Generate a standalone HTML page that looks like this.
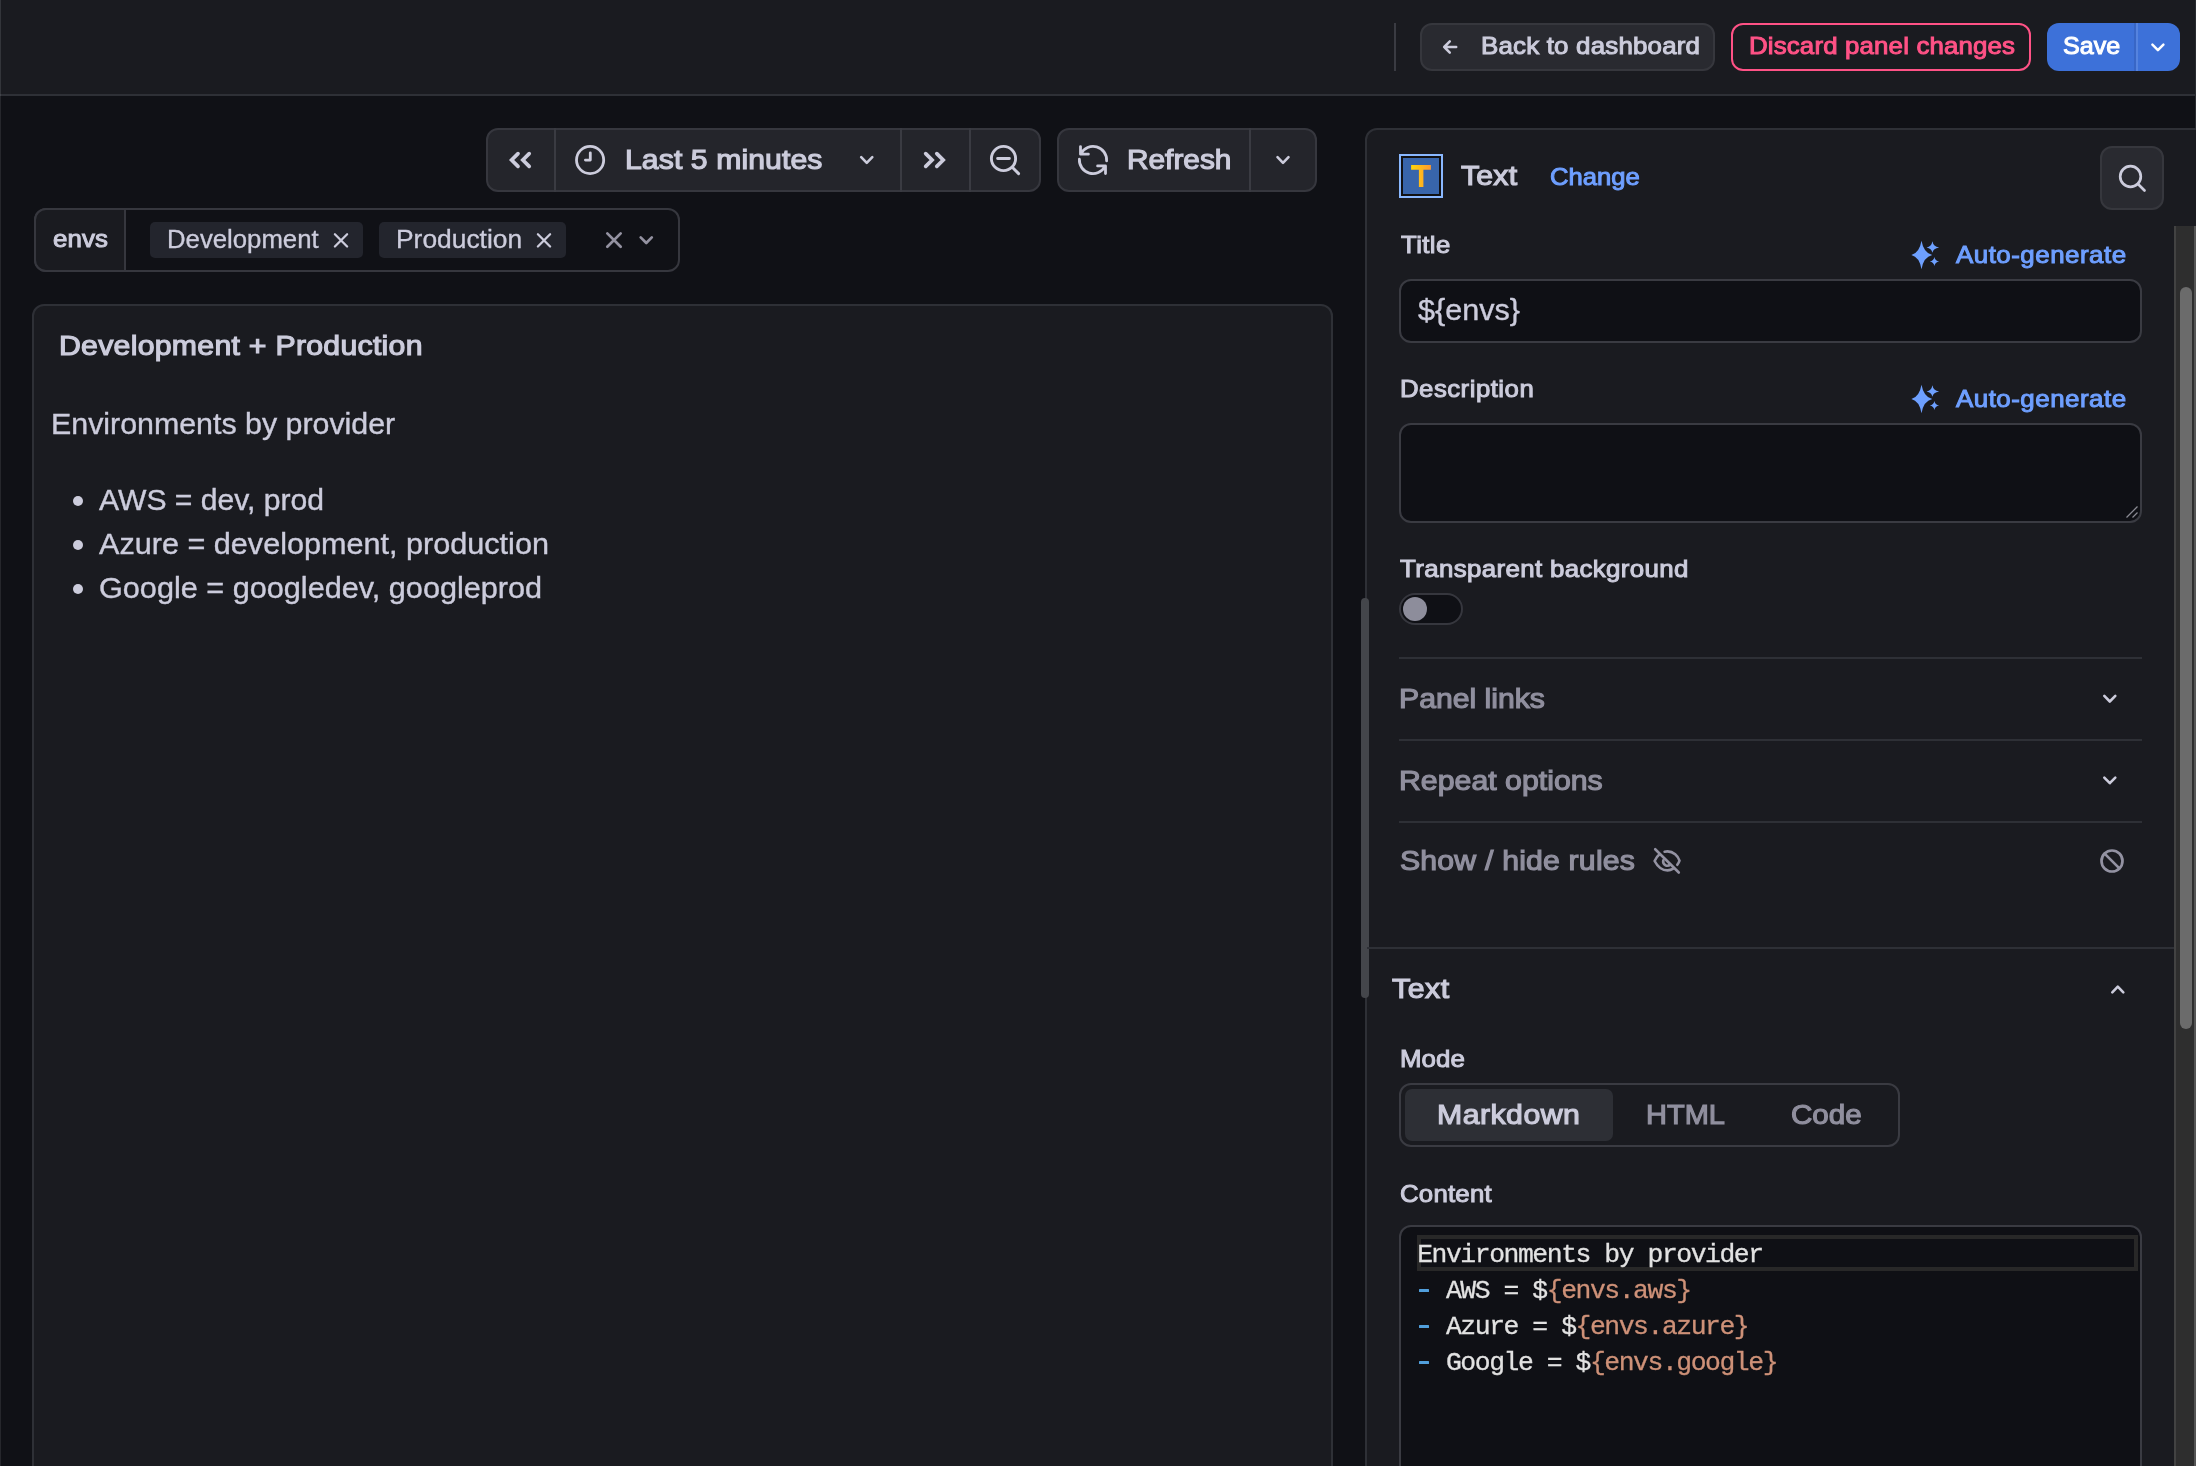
<!DOCTYPE html>
<html lang="en"><head><meta charset="utf-8"><title>Edit panel - Grafana</title>
<style>
html,body{margin:0;padding:0;}
body{width:2196px;height:1466px;overflow:hidden;position:relative;background:#101116;font-family:"Liberation Sans",sans-serif;}
.b{position:absolute;box-sizing:border-box;}
.t{position:absolute;white-space:pre;transform-origin:0 0;font-family:"Liberation Sans",sans-serif;}
.m{position:absolute;white-space:pre;font-family:"Liberation Mono",monospace;font-size:26.4px;line-height:36px;color:#e2e2e2;letter-spacing:-1.443px;-webkit-text-stroke:0.3px currentColor;}
.m i{font-style:normal;color:#ce9178;}
.m b{font-weight:400;color:#569cd6;}
svg.ov{position:absolute;left:0;top:0;overflow:visible;}
</style></head>
<body>

<!-- top bar -->
<div class="b" style="left:0;top:0;width:2195px;height:96px;background:#1a1b20;border-bottom:2px solid #2e3036;"></div>
<div class="b" style="left:0;top:0;width:1px;height:94px;background:#33353a;"></div>
<div class="b" style="left:0;top:94px;width:1px;height:2px;background:#42444a;"></div>
<div class="b" style="left:0;top:96px;width:1px;height:1370px;background:#26272c;"></div>
<div class="b" style="left:2195px;top:0;width:1px;height:226px;background:#292b30;"></div>
<div class="b" style="left:1394px;top:23px;width:2px;height:48px;background:#3a3b42;"></div>
<div class="b" style="left:1420px;top:23px;width:295px;height:48px;background:#292a30;border:2px solid #36373d;border-radius:12px;"></div>
<div class="b" style="left:1731px;top:23px;width:300px;height:48px;border:2px solid #ff5286;border-radius:12px;"></div>
<div class="b" style="left:2047px;top:23px;width:133px;height:48px;background:#3d71d9;border-radius:12px;"></div>
<div class="b" style="left:2134px;top:23px;width:2px;height:48px;background:#3866c6;"></div>
<div class="b" style="left:2136px;top:23px;width:2px;height:48px;background:#5583df;"></div>

<!-- toolbar: time picker group -->
<div class="b" style="left:486px;top:128px;width:555px;height:64px;background:#24252b;border:2px solid #36373e;border-radius:12px;"></div>
<div class="b" style="left:554px;top:128px;width:2px;height:64px;background:#3a3b42;"></div>
<div class="b" style="left:900px;top:128px;width:2px;height:64px;background:#3a3b42;"></div>
<div class="b" style="left:969px;top:128px;width:2px;height:64px;background:#3a3b42;"></div>
<!-- refresh group -->
<div class="b" style="left:1057px;top:128px;width:260px;height:64px;background:#24252b;border:2px solid #36373e;border-radius:12px;"></div>
<div class="b" style="left:1249px;top:128px;width:2px;height:64px;background:#3a3b42;"></div>

<!-- variable row -->
<div class="b" style="left:34px;top:208px;width:646px;height:64px;background:#101116;border:2px solid #36373e;border-radius:12px;"></div>
<div class="b" style="left:34px;top:208px;width:92px;height:64px;background:#1a1b20;border:2px solid #36373e;border-radius:12px 0 0 12px;"></div>
<div class="b" style="left:150px;top:222px;width:213px;height:36px;background:#23252d;border-radius:5px;"></div>
<div class="b" style="left:379px;top:222px;width:187px;height:36px;background:#23252d;border-radius:5px;"></div>

<!-- panel -->
<div class="b" style="left:32px;top:304px;width:1301px;height:1200px;background:#1a1b20;border:2px solid #2e3036;border-radius:12px;"></div>
<div class="b" style="left:72.5px;top:495.5px;width:10px;height:10px;border-radius:50%;background:#ccccdc;"></div>
<div class="b" style="left:72.5px;top:539.5px;width:10px;height:10px;border-radius:50%;background:#ccccdc;"></div>
<div class="b" style="left:72.5px;top:583.5px;width:10px;height:10px;border-radius:50%;background:#ccccdc;"></div>

<!-- right pane -->
<div class="b" style="left:1365px;top:128px;width:900px;height:1400px;background:#1a1b20;border:2px solid #2e3036;border-radius:12px 0 0 0;"></div>
<!-- splitter handle -->
<div class="b" style="left:1361px;top:598px;width:8px;height:400px;background:#44464b;border-radius:4px;"></div>
<!-- viz icon -->
<div class="b" style="left:1399px;top:154px;width:44px;height:44px;background:#111113;border:2px solid #8ab8ff;"></div>
<div class="b" style="left:1403.4px;top:158.4px;width:35.4px;height:35.4px;background:#3865ab;"></div>
<svg class="ov" width="2196" height="1466" viewBox="0 0 2196 1466"><defs><linearGradient id="tg" x1="1411" y1="0" x2="1431" y2="0" gradientUnits="userSpaceOnUse"><stop offset="0" stop-color="#ffd60a"/><stop offset="1" stop-color="#ff9830"/></linearGradient></defs><path d="M1411.1 164.9H1430.9V169.8H1423.4V187H1418.9V169.8H1411.1Z" fill="url(#tg)"/></svg>
<!-- search button -->
<div class="b" style="left:2100px;top:146px;width:64px;height:64px;background:#292a30;border:2px solid #36373d;border-radius:12px;"></div>
<!-- title input -->
<div class="b" style="left:1399px;top:279px;width:743px;height:64px;background:#0f1015;border:2px solid #3a3b42;border-radius:12px;"></div>
<!-- description textarea -->
<div class="b" style="left:1399px;top:423px;width:743px;height:100px;background:#0f1015;border:2px solid #3a3b42;border-radius:12px;"></div>
<!-- switch -->
<div class="b" style="left:1399px;top:593px;width:64px;height:32px;background:#0f1015;border:2px solid #36373e;border-radius:16px;"></div>
<div class="b" style="left:1402.7px;top:596.7px;width:24.6px;height:24.6px;background:#8d8d9b;border-radius:50%;"></div>
<!-- dividers -->
<div class="b" style="left:1399px;top:657px;width:743px;height:2px;background:#2e3036;"></div>
<div class="b" style="left:1399px;top:739px;width:743px;height:2px;background:#2e3036;"></div>
<div class="b" style="left:1399px;top:821px;width:743px;height:2px;background:#2e3036;"></div>
<div class="b" style="left:1367px;top:947px;width:807px;height:2px;background:#2e3036;"></div>
<!-- radio group -->
<div class="b" style="left:1399px;top:1083px;width:501px;height:64px;background:#1a1b20;border:2px solid #3a3b42;border-radius:12px;"></div>
<div class="b" style="left:1405px;top:1089px;width:208px;height:52px;background:#2d2f35;border-radius:7px;"></div>
<!-- code editor -->
<div class="b" style="left:1399px;top:1225px;width:743px;height:300px;background:#0f1015;border:2px solid #3a3b42;border-radius:12px;"></div>
<div class="b" style="left:1417px;top:1235px;width:721px;height:36px;border:4px solid #282828;"></div>
<!-- scrollbar -->
<div class="b" style="left:2174px;top:226px;width:22px;height:1240px;background:#2e2e2e;border-left:2px solid #424242;border-right:2px solid #555555;"></div>
<div class="b" style="left:2180px;top:287px;width:12px;height:742px;background:#6b6b6b;border-radius:6px;"></div>

<div id="txt" style="position:absolute;left:0;top:0;width:2196px;height:1466px;will-change:transform;">
<span class="t" id="back" style="left:1481.25px;top:34.27px;font-size:23.90px;line-height:23.90px;color:#ccccdc;letter-spacing:0.167px;-webkit-text-stroke:1.00px #ccccdc;transform:scaleX(1.0848);">Back to dashboard</span>
<span class="t" id="discard" style="left:1748.55px;top:34.27px;font-size:23.90px;line-height:23.90px;color:#ff5286;letter-spacing:0.146px;-webkit-text-stroke:1.00px #ff5286;transform:scaleX(1.0816);">Discard panel changes</span>
<span class="t" id="save" style="left:2063.10px;top:34.27px;font-size:23.90px;line-height:23.90px;color:#ffffff;letter-spacing:0.000px;-webkit-text-stroke:1.00px #ffffff;transform:scaleX(1.0486);">Save</span>
<span class="t" id="last5" style="left:624.75px;top:145.81px;font-size:27.88px;line-height:27.88px;color:#ccccdc;letter-spacing:0.085px;-webkit-text-stroke:1.17px #ccccdc;transform:scaleX(1.0822);">Last 5 minutes</span>
<span class="t" id="refresh" style="left:1127.45px;top:145.81px;font-size:27.88px;line-height:27.88px;color:#ccccdc;letter-spacing:0.000px;-webkit-text-stroke:1.17px #ccccdc;transform:scaleX(1.0696);">Refresh</span>
<span class="t" id="envs" style="left:53.00px;top:227.47px;font-size:23.90px;line-height:23.90px;color:#ccccdc;letter-spacing:0.086px;-webkit-text-stroke:1.00px #ccccdc;transform:scaleX(1.0813);">envs</span>
<span class="t" id="chipdev" style="left:166.50px;top:226.83px;font-size:24.89px;line-height:24.89px;color:#ccccdc;letter-spacing:0.000px;-webkit-text-stroke:0.32px #ccccdc;transform:scaleX(1.0345);">Development</span>
<span class="t" id="chipprod" style="left:396.00px;top:226.83px;font-size:24.89px;line-height:24.89px;color:#ccccdc;letter-spacing:0.000px;-webkit-text-stroke:0.32px #ccccdc;transform:scaleX(1.0605);">Production</span>
<span class="t" id="ptitle" style="left:58.50px;top:331.81px;font-size:27.88px;line-height:27.88px;color:#ccccdc;letter-spacing:0.249px;-webkit-text-stroke:1.17px #ccccdc;transform:scaleX(1.0850);">Development + Production</span>
<span class="t" id="pl1" style="left:50.50px;top:410.29px;font-size:29.04px;line-height:29.04px;color:#ccccdc;letter-spacing:0.000px;-webkit-text-stroke:0.38px #ccccdc;transform:scaleX(1.0457);">Environments by provider</span>
<span class="t" id="pl2" style="left:98.75px;top:486.29px;font-size:29.04px;line-height:29.04px;color:#ccccdc;letter-spacing:0.000px;-webkit-text-stroke:0.38px #ccccdc;transform:scaleX(1.0372);">AWS = dev, prod</span>
<span class="t" id="pl3" style="left:98.75px;top:530.29px;font-size:29.04px;line-height:29.04px;color:#ccccdc;letter-spacing:0.000px;-webkit-text-stroke:0.38px #ccccdc;transform:scaleX(1.0541);">Azure = development, production</span>
<span class="t" id="pl4" style="left:98.50px;top:574.25px;font-size:29.04px;line-height:29.04px;color:#ccccdc;letter-spacing:0.000px;-webkit-text-stroke:0.38px #ccccdc;transform:scaleX(1.0552);">Google = googledev, googleprod</span>
<span class="t" id="vtext" style="left:1460.50px;top:161.81px;font-size:27.88px;line-height:27.88px;color:#ccccdc;letter-spacing:0.185px;-webkit-text-stroke:1.17px #ccccdc;transform:scaleX(1.0850);">Text</span>
<span class="t" id="change" style="left:1549.75px;top:165.27px;font-size:23.90px;line-height:23.90px;color:#6e9fff;letter-spacing:0.000px;-webkit-text-stroke:1.00px #6e9fff;transform:scaleX(1.0724);">Change</span>
<span class="t" id="ltitle" style="left:1400.75px;top:233.27px;font-size:23.90px;line-height:23.90px;color:#ccccdc;letter-spacing:0.409px;-webkit-text-stroke:1.00px #ccccdc;transform:scaleX(1.0740);">Title</span>
<span class="t" id="auto1" style="left:1956.30px;top:243.27px;font-size:23.90px;line-height:23.90px;color:#6e9fff;letter-spacing:0.458px;-webkit-text-stroke:1.00px #6e9fff;transform:scaleX(1.0837);">Auto-generate</span>
<span class="t" id="vtitle" style="left:1418.25px;top:296.23px;font-size:29.04px;line-height:29.04px;color:#ccccdc;letter-spacing:0.000px;-webkit-text-stroke:0.38px #ccccdc;transform:scaleX(1.0517);">${envs}</span>
<span class="t" id="ldesc" style="left:1400.25px;top:377.27px;font-size:23.90px;line-height:23.90px;color:#ccccdc;letter-spacing:0.466px;-webkit-text-stroke:1.00px #ccccdc;transform:scaleX(1.0768);">Description</span>
<span class="t" id="auto2" style="left:1956.30px;top:387.27px;font-size:23.90px;line-height:23.90px;color:#6e9fff;letter-spacing:0.458px;-webkit-text-stroke:1.00px #6e9fff;transform:scaleX(1.0837);">Auto-generate</span>
<span class="t" id="ltrans" style="left:1400.00px;top:557.27px;font-size:23.90px;line-height:23.90px;color:#ccccdc;letter-spacing:0.329px;-webkit-text-stroke:1.00px #ccccdc;transform:scaleX(1.0831);">Transparent background</span>
<span class="t" id="plinks" style="left:1399.25px;top:684.81px;font-size:27.88px;line-height:27.88px;color:#908f9e;letter-spacing:0.000px;-webkit-text-stroke:1.17px #908f9e;transform:scaleX(1.0828);">Panel links</span>
<span class="t" id="repeat" style="left:1399.25px;top:766.81px;font-size:27.88px;line-height:27.88px;color:#908f9e;letter-spacing:0.019px;-webkit-text-stroke:1.17px #908f9e;transform:scaleX(1.0850);">Repeat options</span>
<span class="t" id="showhide" style="left:1399.50px;top:846.81px;font-size:27.88px;line-height:27.88px;color:#908f9e;letter-spacing:0.167px;-webkit-text-stroke:1.17px #908f9e;transform:scaleX(1.0850);">Show / hide rules</span>
<span class="t" id="stext" style="left:1392.00px;top:974.81px;font-size:27.88px;line-height:27.88px;color:#ccccdc;letter-spacing:0.489px;-webkit-text-stroke:1.17px #ccccdc;transform:scaleX(1.0850);">Text</span>
<span class="t" id="lmode" style="left:1400.25px;top:1047.27px;font-size:23.90px;line-height:23.90px;color:#ccccdc;letter-spacing:0.102px;-webkit-text-stroke:1.00px #ccccdc;transform:scaleX(1.0808);">Mode</span>
<span class="t" id="markdown" style="left:1437.25px;top:1100.81px;font-size:27.88px;line-height:27.88px;color:#ccccdc;letter-spacing:0.434px;-webkit-text-stroke:1.17px #ccccdc;transform:scaleX(1.0850);">Markdown</span>
<span class="t" id="html" style="left:1646.00px;top:1100.81px;font-size:27.88px;line-height:27.88px;color:#908f9e;letter-spacing:0.000px;-webkit-text-stroke:1.17px #908f9e;transform:scaleX(1.0405);">HTML</span>
<span class="t" id="code" style="left:1791.00px;top:1100.81px;font-size:27.88px;line-height:27.88px;color:#908f9e;letter-spacing:0.000px;-webkit-text-stroke:1.17px #908f9e;transform:scaleX(1.0618);">Code</span>
<span class="t" id="lcontent" style="left:1399.50px;top:1181.98px;font-size:23.90px;line-height:23.90px;color:#ccccdc;letter-spacing:0.210px;-webkit-text-stroke:1.00px #ccccdc;transform:scaleX(1.0791);">Content</span>
<span class="m" style="left:1417.2px;top:1237px;">Environments by provider</span>
<span class="m" style="left:1417.2px;top:1273px;">  AWS = $<i>{envs.aws}</i></span>
<span class="m" style="left:1417.2px;top:1309px;">  Azure = $<i>{envs.azure}</i></span>
<span class="m" style="left:1417.2px;top:1345px;">  Google = $<i>{envs.google}</i></span>
<div class="b" style="left:1418.9px;top:1289.1px;width:10.2px;height:2.7px;background:#519fdc;border-radius:0.5px;"></div>
<div class="b" style="left:1418.9px;top:1325.1px;width:10.2px;height:2.7px;background:#519fdc;border-radius:0.5px;"></div>
<div class="b" style="left:1418.9px;top:1361.1px;width:10.2px;height:2.7px;background:#519fdc;border-radius:0.5px;"></div>

</div>
<svg class="ov" width="2196" height="1466" viewBox="0 0 2196 1466" fill="none" stroke-linecap="round" stroke-linejoin="round">
<!-- back arrow -->
<g stroke="#ccccdc" stroke-width="2.5"><path d="M1444.2 47H1456.2M1449.8 41.3L1444.2 47L1449.8 52.7"/></g>
<!-- save chevron -->
<g stroke="#ffffff" stroke-width="2.5"><path d="M2152.4 44.7L2157.9 50.2L2163.4 44.7"/></g>
<!-- double left -->
<g stroke="#ccccdc" stroke-width="3.7" stroke-linejoin="miter"><path d="M518 153.6L511.6 160L518 166.4M529.2 153.6L522.8 160L529.2 166.4"/></g>
<!-- clock -->
<g stroke="#ccccdc" stroke-width="2.8"><circle cx="590.1" cy="160" r="13.6"/><path d="M590.3 152.8V160.1H585.4"/></g>
<!-- time chevron -->
<g stroke="#ccccdc" stroke-width="2.6"><path d="M861.2 157.2L866.75 162.8L872.3 157.2"/></g>
<!-- double right -->
<g stroke="#ccccdc" stroke-width="3.7" stroke-linejoin="miter"><path d="M925.7 153.6L932.1 160L925.7 166.4M936.8 153.6L943.2 160L936.8 166.4"/></g>
<!-- zoom out -->
<g stroke="#ccccdc" stroke-width="2.9"><circle cx="1003.5" cy="158.5" r="12.1"/><path d="M1012.3 167.3L1018.6 173.6M997.6 158.5H1009.4"/></g>
<!-- sync -->
<g stroke="#ccccdc" stroke-width="2.8"><path d="M1081 153.6A13.6 13.6 0 0 1 1106.6 160.8M1079.4 159.2A13.6 13.6 0 0 0 1105 166.4M1080.5 146.6V154.2H1088.4M1097.6 165.9H1105.5V173.6"/></g>
<!-- refresh chevron -->
<g stroke="#ccccdc" stroke-width="2.6"><path d="M1277.5 157.2L1283 162.8L1288.5 157.2"/></g>
<!-- chip X -->
<g stroke="#ccccdc" stroke-width="2.3"><path d="M334.9 234.3L347.1 246.5M347.1 234.3L334.9 246.5"/><path d="M537.9 234.3L550.1 246.5M550.1 234.3L537.9 246.5"/></g>
<!-- clear X + chevron -->
<g stroke="#9492a1" stroke-width="2.7"><path d="M607.3 233.4L620.7 246.8M620.7 233.4L607.3 246.8"/><path d="M640.7 237.4L646.25 243L651.8 237.4"/></g>
<!-- search -->
<g stroke="#ccccdc" stroke-width="2.7"><circle cx="2130.5" cy="176.5" r="10.3"/><path d="M2138 184L2144.5 190.5"/></g>
<!-- sparkles -->
<g fill="#6ea0ff" stroke="none">
<path id="sp1" d="M1921.5 240.8Q1923.6 253 1932.2 255.1Q1923.6 257.2 1921.5 269.2Q1919.4 257.2 1911.4 255.1Q1919.4 253 1921.5 240.8Z"/>
<path id="sp2" d="M1932.4 241.2Q1933.3 246.6 1939.1 247.6Q1933.3 248.6 1932.4 252.8Q1931.5 248.6 1926.6 247.6Q1931.5 246.6 1932.4 241.2Z"/>
<path id="sp3" d="M1934.4 256.9Q1935.1 260.7 1939.1 261.5Q1935.1 262.3 1934.4 266Q1933.7 262.3 1929.8 261.5Q1933.7 260.7 1934.4 256.9Z"/>
<use href="#sp1" y="144"/><use href="#sp2" y="144"/><use href="#sp3" y="144"/>
</g>
<!-- textarea resize grip -->
<g stroke="#8a8a92" stroke-width="1.3" stroke-linecap="butt"><path d="M2126.5 517.5L2137.5 506.5M2132.5 517.5L2137.5 512.5"/></g>
<!-- section chevrons -->
<g stroke="#ccccdc" stroke-width="2.6"><path d="M2104.3 695.9L2109.8 701.5L2115.3 695.9"/><path d="M2104.3 777.6L2109.8 783.2L2115.3 777.6"/><path d="M2112.3 992.3L2117.8 986.7L2123.3 992.3"/></g>
<!-- ban -->
<g stroke="#9392a2" stroke-width="2.7"><circle cx="2112" cy="861" r="10.5"/><path d="M2104.6 853.6L2119.4 868.4"/></g>
<!-- eye slash -->
<g stroke="#9392a2" stroke-width="2.6"><path d="M1655.2 849.2L1678.8 872.5"/><path d="M1659.3 854.6C1657 856.5 1655.6 858.8 1654.6 861C1657.5 866.5 1662 870.4 1667.5 870.4C1669.6 870.4 1671.5 869.8 1673.2 868.7"/><path d="M1664.6 851.7C1665.5 851.5 1666.5 851.4 1667.5 851.4C1673.5 851.4 1678 856 1679.5 860.6C1679 862.2 1678.2 863.6 1677.3 864.8"/><path d="M1663.3 860.3A4.3 4.3 0 0 0 1670.3 864.6"/></g>
</svg>

</body></html>
